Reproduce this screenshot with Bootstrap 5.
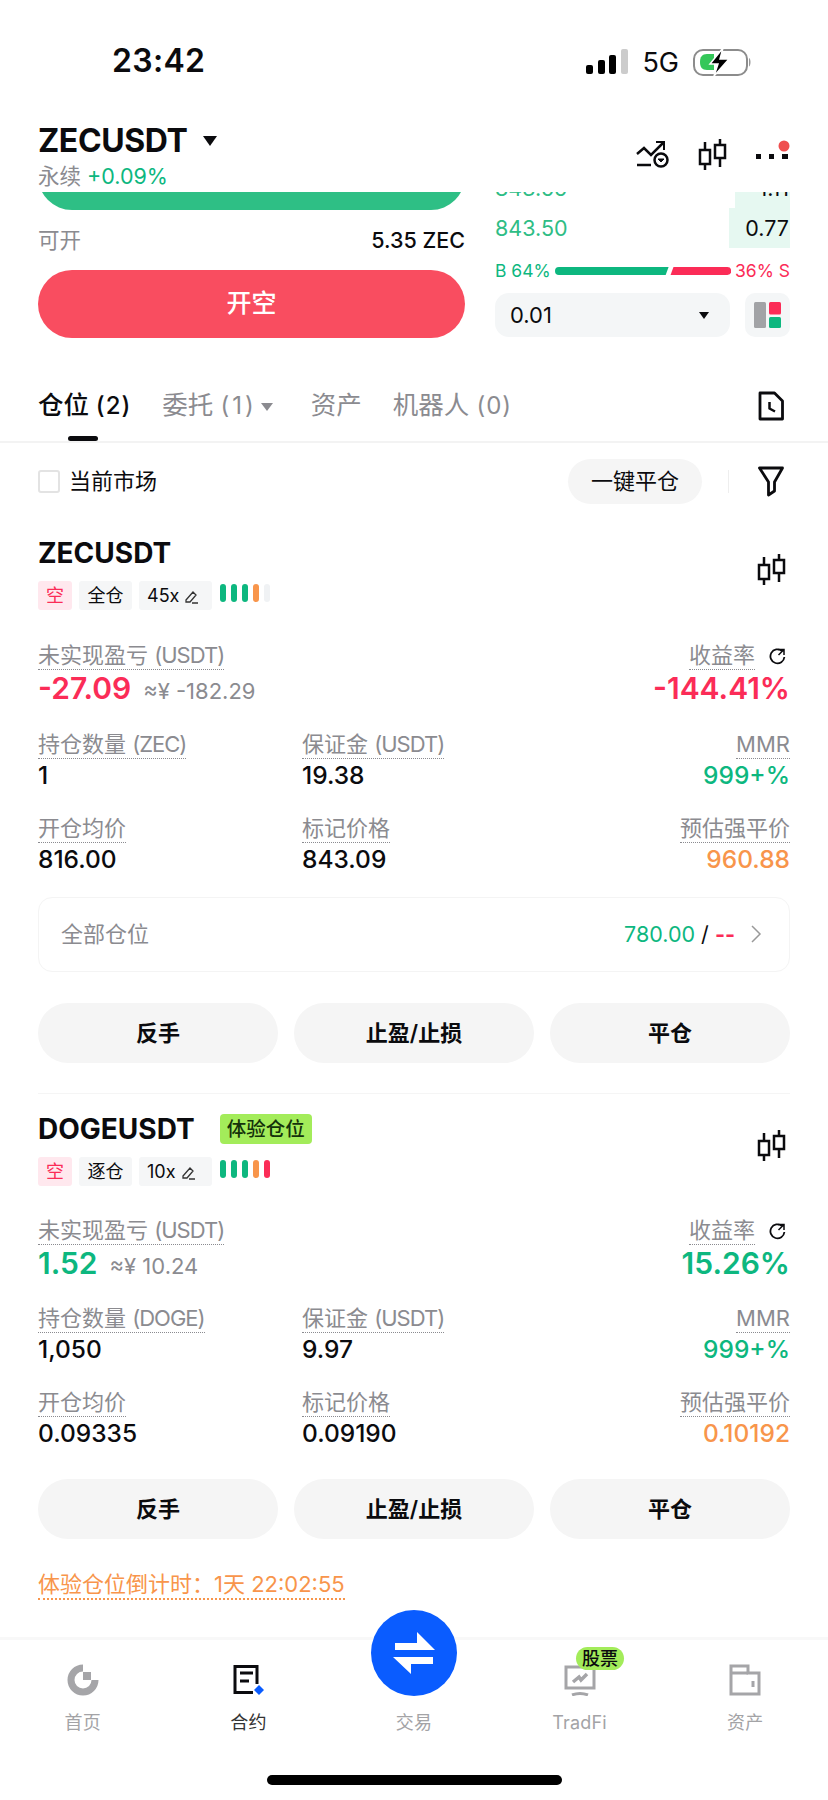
<!DOCTYPE html>
<html lang="zh-CN">
<head>
<meta charset="utf-8">
<title>ZECUSDT</title>
<link rel="stylesheet" href="https://cdn.jsdelivr.net/npm/bootstrap@5.3.0/dist/css/bootstrap.min.css">
<style>
:root{--ink:#0b0b0e;--mute:#8b8b90;--up:#0db77f;--down:#fb2c57;--warn:#f8954b;--soft:#f5f5f5;--lime:#a3ec5a}
html,body{margin:0;background:#fff}
body{font-family:Inter,"Noto Sans CJK SC",sans-serif;color:var(--ink);font-size:22px;line-height:1.2}
.app-shell{width:828px;height:1800px;overflow:hidden;position:relative;background:#fff}
.status-row{height:110px;padding:45px 76px 0 112px}
.clock{font-size:32px;font-weight:600;line-height:32px;letter-spacing:.3px}
.net{font-size:27px;line-height:30px;margin:3px 13px 0}
.head-row{height:82px;padding:0 38px}
.pair{font-size:32px;font-weight:700;line-height:38px;letter-spacing:-.4px;margin-top:12px}
.tick{width:0;height:0;border-left:7px solid transparent;border-right:7px solid transparent;border-top:10px solid var(--ink);display:inline-block}
.sub-line{font-size:21.500px;line-height:26px;margin-top:3px;color:var(--mute)}
.txt-up{color:var(--up)}.txt-down{color:var(--down)}.txt-warn{color:var(--warn)}.txt-mute{color:var(--mute)}
.head-icons{gap:28px;padding-top:28px;height:60px}
.scroll-clip{height:1445px;overflow:hidden}
.panel{height:146px;padding:0 38px;gap:30px}
.panel-l{width:427px}
.panel-r{width:295px}
.clip-btn{height:18px;overflow:hidden}
.clip-btn div{height:68px;margin-top:-50px;background:#2ebf85;border-radius:34px}
.avail{height:30px;margin-top:15px;font-size:21.500px;color:var(--mute);line-height:30px}
.avail b{font-weight:500;color:var(--ink);font-size:21.500px}
.sell-btn{height:68px;width:100%;margin-top:15px;background:#f94d60;color:#fff;border:0;border-radius:34px;font-size:25px;font-weight:500}
.sell-btn:hover,.sell-btn:active{background:#f94d60!important;color:#fff!important}
.depth-a{height:16px;overflow:hidden;position:relative}
.depth-a .fill{position:absolute;right:0;top:0;bottom:0;width:55px;background:#e6f8f1}
.depth-a .cells{position:relative;margin-top:-24px;line-height:40px;height:40px}
.depth-b{height:40px;line-height:40px;position:relative;font-size:21.500px;color:#2ebd85}
.depth-b .fill{position:absolute;right:0;top:0;bottom:0;width:61px;background:#e6f8f1}
.depth-b span{position:relative}
.depth-a .cells{font-size:21.500px;color:#2ebd85}
.qty{color:var(--ink);padding-right:1px}
.split-line{height:20px;margin-top:13px;font-size:17.500px;line-height:20px;gap:4px;white-space:nowrap}
.split-line svg{flex:1;width:0;min-width:0}
.lot-row{margin-top:12px;gap:15px}
.lot{width:235px;height:44px;background:#f4f6f7;border-radius:14px;padding:0 21px 0 15px;font-size:22px}
.lot .tick{border-left-width:5px;border-right-width:5px;border-top-width:7px}
.lay{width:45px;height:44px;background:#f4f6f7;border-radius:10px}
.tab-zone{height:105px;padding:0 38px;border-bottom:2px solid #f3f3f3;position:relative}
.tab-zone .nav{gap:31px;padding-top:52px;flex-wrap:nowrap}
.tab-item{font-size:25.500px;line-height:30px;color:var(--mute);white-space:nowrap}
.tab-item.on{color:var(--ink);font-weight:500}
.tab-item .num{font-size:24px;letter-spacing:1px}
.tab-item .num.one{letter-spacing:3px}
.tab-item.after-menu{margin-left:7px}
.tab-bar-mark{position:absolute;left:68px;bottom:0;width:30px;height:5px;background:#0b0b0e;border-radius:3px}
.tab-doc{position:absolute;right:44px;top:53px}
.tab-item .tick{border-left-width:6px;border-right-width:6px;border-top-width:8px;border-top-color:var(--mute);vertical-align:3px;margin-left:4px}
.filter-row{height:60px;padding:0 44px 0 38px;margin-top:8px}
.chk{width:22px;height:23px;border:2px solid #e3e3e3;border-radius:3px;margin-right:9px}
.filter-lab{font-size:22px}
.flat-btn{width:134px;height:45px;background:var(--soft);border:0;border-radius:23px;font-size:22px;color:var(--ink);padding:0}
.vr-line{width:1px;height:23px;background:#eee;margin:0 29px 0 26px}
.pos-block{padding:0 38px}
.pos-top{margin-top:24px}
.pos-title{font-size:28px;font-weight:700;line-height:36px}
.exp-tag{background:var(--lime);color:#14320a;font-size:19.500px;line-height:30px;padding:0 7px;border-radius:4px;margin-left:25px;font-weight:500}
.tag-row{margin-top:10px;height:29px}
.tag-chip{height:29px;line-height:29px;font-size:18px;background:#f5f6f7;border-radius:3px;margin-right:7px;white-space:nowrap;width:53px;text-align:center}
.tag-chip.short{background:#ffe8ee;color:var(--down);width:34px}
.tag-chip.lev{width:73px;text-align:left;padding-left:8px}
.pips{gap:5.500px;margin-left:1px;margin-top:-5px}
.pips i{display:block;width:5.500px;height:18px;border-radius:3px}
.cell{display:flex;flex-direction:column;align-items:flex-start}
.cell.end{align-items:flex-end}
.lab{display:block;font-size:22px;line-height:27px;color:var(--mute);border-bottom:1px dotted #8b8b90;white-space:nowrap}
.unit{letter-spacing:-1px}
.val{font-size:24.500px;line-height:32px;font-weight:500}
.pnl-row{margin-top:32px}
.pnl-val{font-size:30px;line-height:36px;font-weight:600}
.cny{font-size:22px;color:var(--mute);margin-left:12px}
.tri-grid{display:grid;grid-template-columns:264px 1fr auto;margin-top:25px}
.tri-grid.next{margin-top:24px}
.sum-box{height:75px;margin-top:22px;border:1px solid #f4f4f4;border-radius:14px;padding:0 27px 0 22px;font-size:21.500px}
.sum-name{font-size:22px}
.acts{gap:16px;margin-top:31px}
.act-btn{flex:1;height:60px;background:var(--soft);border:0;border-radius:30px;font-size:22px;font-weight:600;color:var(--ink);padding:0}
.act-btn:hover{background:var(--soft);color:var(--ink)}
.sep-line{height:1px;background:#f5f5f5;margin:30px 38px 17px}
.later .pnl-row{margin-top:31px}
.later .tri-grid{margin-top:24px}
.later .acts{margin-top:30px}
.countdown{display:inline-block;margin-top:32px;color:var(--warn);font-size:22px;line-height:27px;border-bottom:2px dotted var(--warn)}
.rate-ico{margin:0 4px 0 14px}
.chart-ico{margin:0 3px 8px 0}
.dock{height:163px;position:relative;border-top:3px solid #f8f8f8;background:#fff}
.dock-item{width:165.600px;padding-top:24px;text-align:center;font-size:18px;line-height:22px;color:#a3a3a6;letter-spacing:.2px}
.dock-item svg{display:block;margin:0 auto 16px}
.dock-item.on{color:#333}
.swap-disc{position:absolute;left:371px;top:-30px;width:86px;height:86px;border-radius:50%;background:#0a5cff}
.stock-pill{position:absolute;left:576px;top:7px;width:48px;height:23px;line-height:23px;border-radius:12px;background:var(--lime);color:#0b0b0e;font-size:18px;font-weight:500;text-align:center}
.home-bar{position:absolute;left:267px;top:135px;width:295px;height:10px;background:#000;border-radius:5px}
</style>
</head>
<body>
<div class="app-shell">
  <div class="status-row d-flex justify-content-between align-items-start">
    <div class="clock">23:42</div>
    <div class="d-flex align-items-center">
      <svg width="43" height="26" viewBox="0 0 43 26"><rect x="0" y="16" width="7" height="9" rx="2" fill="#000"/><rect x="12" y="11" width="7" height="14" rx="2" fill="#000"/><rect x="23" y="6" width="7" height="19" rx="2" fill="#000"/><rect x="35" y="0" width="7" height="25" rx="2" fill="#ccc"/></svg>
      <span class="net">5G</span>
      <svg width="60" height="30" viewBox="0 0 60 30"><rect x="2" y="3" width="53" height="25" rx="9" fill="none" stroke="#8c8c8c" stroke-width="2"/><path d="M57 11c2 .7 2 7.500 0 8.500z" fill="#999"/><path d="M8 15c0-5 2-8 7-8h7v16h-7c-5 0-7-3-7-8z" fill="#34c759"/><path d="M31 1 18 17h8l-4 12 15-17h-9z" fill="#000" stroke="#fff" stroke-width="1.500"/></svg>
    </div>
  </div>

  <div class="head-row d-flex justify-content-between">
    <div>
      <div class="pair d-flex align-items-center">ZECUSDT<span class="tick ms-3"></span></div>
      <div class="sub-line">永续 <span class="txt-up">+0.09%</span></div>
    </div>
    <div class="head-icons d-flex align-items-center">
      <svg width="34" height="28" viewBox="0 0 34 28" fill="none" stroke="#0b0b0e" stroke-width="2.500"><path d="M1 14 8 8l7 7L27 3"/><path d="M20 2h8v8" stroke-width="2"/><path d="M1 25h14"/><circle cx="25" cy="20" r="6.500"/><path d="M22 19h6l-3 3z" fill="#0b0b0e" stroke-width="1"/></svg>
      <svg width="30" height="32" viewBox="0 0 30 32" fill="none" stroke="#0b0b0e" stroke-width="2.500"><path d="M7 4v9M7 26v6"/><rect x="2" y="12" width="10" height="14"/><path d="M22 1v6M22 20v9"/><rect x="17" y="7" width="10" height="13"/></svg>
      <svg width="34" height="28" viewBox="0 0 34 28"><rect y="14" width="5" height="5" fill="#0b0b0e"/><rect x="13" y="14" width="5" height="5" fill="#0b0b0e"/><rect x="26" y="14" width="6" height="5" fill="#0b0b0e"/><circle cx="28" cy="6" r="5.500" fill="#ef4e4e"/></svg>
    </div>
  </div>

  <div class="scroll-clip">
    <div class="panel d-flex">
      <div class="panel-l">
        <div class="clip-btn"><div></div></div>
        <div class="avail d-flex justify-content-between"><span>可开</span><b>5.35 ZEC</b></div>
        <button class="btn sell-btn" type="button">开空</button>
      </div>
      <div class="panel-r">
        <div class="depth-a"><div class="fill"></div><div class="cells d-flex justify-content-between"><span>843.55</span><span class="qty">1.11</span></div></div>
        <div class="depth-b d-flex justify-content-between"><div class="fill"></div><span>843.50</span><span class="qty">0.77</span></div>
        <div class="split-line d-flex align-items-center"><span class="txt-up">B 64%</span>
          <svg height="8" viewBox="0 0 180 8" preserveAspectRatio="none"><path d="M4 0H116L113 8H4a4 4 0 0 1 0-8z" fill="#0db77f"/><path d="M121 0H176a4 4 0 0 1 0 8H118z" fill="#fb2c57"/></svg>
          <span class="txt-down">36% S</span></div>
        <div class="lot-row d-flex">
          <div class="lot d-flex justify-content-between align-items-center"><span>0.01</span><span class="tick"></span></div>
          <div class="lay d-flex align-items-center justify-content-center"><svg width="27" height="26" viewBox="0 0 27 26"><rect width="12" height="26" rx="1.500" fill="#a2a3a6"/><rect x="15" width="12" height="12.500" rx="1.500" fill="#fb2c57"/><rect x="15" y="15" width="12" height="11" rx="1.500" fill="#0db77f"/></svg></div>
        </div>
      </div>
    </div>

    <div class="tab-zone">
      <div class="nav">
        <span class="tab-item on">仓位 <span class="num">(2)</span></span>
        <span class="tab-item">委托 <span class="num one">(1)</span><span class="tick"></span></span>
        <span class="tab-item after-menu">资产</span>
        <span class="tab-item">机器人 <span class="num">(0)</span></span>
      </div>
      <span class="tab-bar-mark"></span>
      <svg class="tab-doc" width="26" height="30" viewBox="0 0 26 30" fill="none" stroke="#0b0b0e" stroke-width="2.800" stroke-linejoin="round"><path d="M2 2h14.500L24.500 10v18H2z"/><path d="M11.500 11v6.500l5.500 3" stroke-width="2.500"/></svg>
    </div>

    <div class="filter-row d-flex align-items-center">
      <span class="chk d-block"></span><span class="filter-lab">当前市场</span>
      <button class="btn flat-btn ms-auto" type="button">一键平仓</button>
      <span class="vr-line"></span>
      <svg width="26" height="31" viewBox="0 0 26 31" fill="none" stroke="#0b0b0e" stroke-width="2.800" stroke-linejoin="round"><path d="M1.500 2h23L16.500 16v9l-6 4V16z"/></svg>
    </div>

    <div class="pos-block">
      <div class="pos-top d-flex justify-content-between align-items-center">
        <div>
          <div class="pos-title">ZECUSDT</div>
          <div class="tag-row d-flex align-items-center">
            <span class="tag-chip short">空</span><span class="tag-chip">全仓</span>
            <span class="tag-chip lev">45x <svg width="15" height="15" viewBox="0 0 15 15" fill="none" stroke="#333" stroke-width="1.300"><path d="M2 10 9 2l3 3-6 7H2zM8 13h6"/></svg></span>
            <span class="pips d-flex"><i style="background:#0db77f"></i><i style="background:#0db77f"></i><i style="background:#0db77f"></i><i style="background:#f8954b"></i><i style="background:#f0f2f4"></i></span>
          </div>
        </div>
        <svg class="chart-ico" width="30" height="32" viewBox="0 0 30 32" fill="none" stroke="#0b0b0e" stroke-width="2.500"><path d="M7 4v9M7 26v6"/><rect x="2" y="12" width="10" height="14"/><path d="M22 1v6M22 20v9"/><rect x="17" y="7" width="10" height="13"/></svg>
      </div>
      <div class="pnl-row d-flex justify-content-between">
        <div class="cell">
          <span class="lab">未实现盈亏 <span class="unit">(USDT)</span></span>
          <div class="d-flex align-items-baseline"><span class="pnl-val txt-down">-27.09</span><span class="cny">≈¥ -182.29</span></div>
        </div>
        <div class="cell end">
          <div class="d-flex align-items-center"><span class="lab">收益率</span><svg class="rate-ico" width="17" height="17" viewBox="0 0 17 17" fill="none" stroke="#0b0b0e" stroke-width="1.800"><path d="M13 3a7 7 0 1 0 2.400 6"/><path d="M9 1.500h6v5.500M15 1.500 9.500 7" stroke-width="1.500"/></svg></div>
          <div class="pnl-val txt-down">-144.41%</div>
        </div>
      </div>
      <div class="tri-grid">
        <div class="cell"><span class="lab">持仓数量 <span class="unit">(ZEC)</span></span><div class="val">1</div></div>
        <div class="cell"><span class="lab">保证金 <span class="unit">(USDT)</span></span><div class="val">19.38</div></div>
        <div class="cell end"><span class="lab">MMR</span><div class="val txt-up">999+%</div></div>
      </div>
      <div class="tri-grid next">
        <div class="cell"><span class="lab">开仓均价</span><div class="val">816.00</div></div>
        <div class="cell"><span class="lab">标记价格</span><div class="val">843.09</div></div>
        <div class="cell end"><span class="lab">预估强平价</span><div class="val txt-warn">960.88</div></div>
      </div>
      <div class="sum-box d-flex justify-content-between align-items-center">
        <span class="txt-mute sum-name">全部仓位</span>
        <span class="d-flex align-items-center"><span class="txt-up">780.00</span>&nbsp;/&nbsp;<span class="txt-down fw-bold">--</span>
          <svg class="ms-3" width="11" height="18" viewBox="0 0 11 18" fill="none" stroke="#999" stroke-width="1.500"><path d="m1 1 8 8-8 8"/></svg></span>
      </div>
      <div class="acts d-flex">
        <button class="btn act-btn" type="button">反手</button><button class="btn act-btn" type="button">止盈/止损</button><button class="btn act-btn" type="button">平仓</button>
      </div>
    </div>

    <div class="sep-line"></div>

    <div class="pos-block later">
      <div class="d-flex justify-content-between align-items-center">
        <div>
          <div class="d-flex align-items-center"><span class="pos-title">DOGEUSDT</span><span class="exp-tag">体验仓位</span></div>
          <div class="tag-row d-flex align-items-center">
            <span class="tag-chip short">空</span><span class="tag-chip">逐仓</span>
            <span class="tag-chip lev">10x <svg width="15" height="15" viewBox="0 0 15 15" fill="none" stroke="#333" stroke-width="1.300"><path d="M2 10 9 2l3 3-6 7H2zM8 13h6"/></svg></span>
            <span class="pips d-flex"><i style="background:#0db77f"></i><i style="background:#0db77f"></i><i style="background:#0db77f"></i><i style="background:#f8954b"></i><i style="background:#fb2c57"></i></span>
          </div>
        </div>
        <svg class="chart-ico" width="30" height="32" viewBox="0 0 30 32" fill="none" stroke="#0b0b0e" stroke-width="2.500"><path d="M7 4v9M7 26v6"/><rect x="2" y="12" width="10" height="14"/><path d="M22 1v6M22 20v9"/><rect x="17" y="7" width="10" height="13"/></svg>
      </div>
      <div class="pnl-row d-flex justify-content-between">
        <div class="cell">
          <span class="lab">未实现盈亏 <span class="unit">(USDT)</span></span>
          <div class="d-flex align-items-baseline"><span class="pnl-val txt-up">1.52</span><span class="cny">≈¥ 10.24</span></div>
        </div>
        <div class="cell end">
          <div class="d-flex align-items-center"><span class="lab">收益率</span><svg class="rate-ico" width="17" height="17" viewBox="0 0 17 17" fill="none" stroke="#0b0b0e" stroke-width="1.800"><path d="M13 3a7 7 0 1 0 2.400 6"/><path d="M9 1.500h6v5.500M15 1.500 9.500 7" stroke-width="1.500"/></svg></div>
          <div class="pnl-val txt-up">15.26%</div>
        </div>
      </div>
      <div class="tri-grid">
        <div class="cell"><span class="lab">持仓数量 <span class="unit">(DOGE)</span></span><div class="val">1,050</div></div>
        <div class="cell"><span class="lab">保证金 <span class="unit">(USDT)</span></span><div class="val">9.97</div></div>
        <div class="cell end"><span class="lab">MMR</span><div class="val txt-up">999+%</div></div>
      </div>
      <div class="tri-grid next">
        <div class="cell"><span class="lab">开仓均价</span><div class="val">0.09335</div></div>
        <div class="cell"><span class="lab">标记价格</span><div class="val">0.09190</div></div>
        <div class="cell end"><span class="lab">预估强平价</span><div class="val txt-warn">0.10192</div></div>
      </div>
      <div class="acts d-flex">
        <button class="btn act-btn" type="button">反手</button><button class="btn act-btn" type="button">止盈/止损</button><button class="btn act-btn" type="button">平仓</button>
      </div>
      <span class="countdown">体验仓位倒计时：1天 22:02:55</span>
    </div>
  </div>

  <div class="dock d-flex">
    <div class="dock-item"><svg width="32" height="32" viewBox="0 0 32 32" fill="none"><path d="M16 4A12 12 0 1 0 28 16" stroke="#a5a5a8" stroke-width="7"/><rect x="16" y="8" width="8" height="8" fill="#a5a5a8"/></svg>首页</div>
    <div class="dock-item on"><svg width="32" height="32" viewBox="0 0 32 32" fill="none"><path d="M25 20V2.500H3v26h18" stroke="#0b0b0e" stroke-width="3"/><path d="M8 9h13M8 17h9" stroke="#0b0b0e" stroke-width="3"/><path d="m27 21 5 5-5 5-5-5z" fill="#0a5cff"/></svg>合约</div>
    <div class="dock-item"><svg width="32" height="32" viewBox="0 0 32 32"></svg>交易</div>
    <div class="dock-item"><svg width="32" height="32" viewBox="0 0 32 32" fill="none" stroke="#a5a5a8" stroke-width="3"><path d="M2 3h28v21H2z"/><path d="M8 31c5-2 11-2 16 0"/><path d="m9 18 6-5 2 3 6-6" stroke-width="3.500"/></svg>TradFi</div>
    <div class="dock-item"><svg width="32" height="32" viewBox="0 0 32 32" fill="none" stroke="#a5a5a8" stroke-width="3"><path d="M2 30V2h17v7h11v21z"/><path d="M2 9h17"/><path d="M24 17v6"/></svg>资产</div>
    <div class="swap-disc"><svg width="86" height="86" viewBox="0 0 86 86" fill="#fff"><path d="M24 33h22V22l18 18H24z"/><path d="M62 47v7H40v10L22 47z"/></svg></div>
    <div class="stock-pill">股票</div>
    <div class="home-bar"></div>
  </div>
</div>
</body>
</html>
